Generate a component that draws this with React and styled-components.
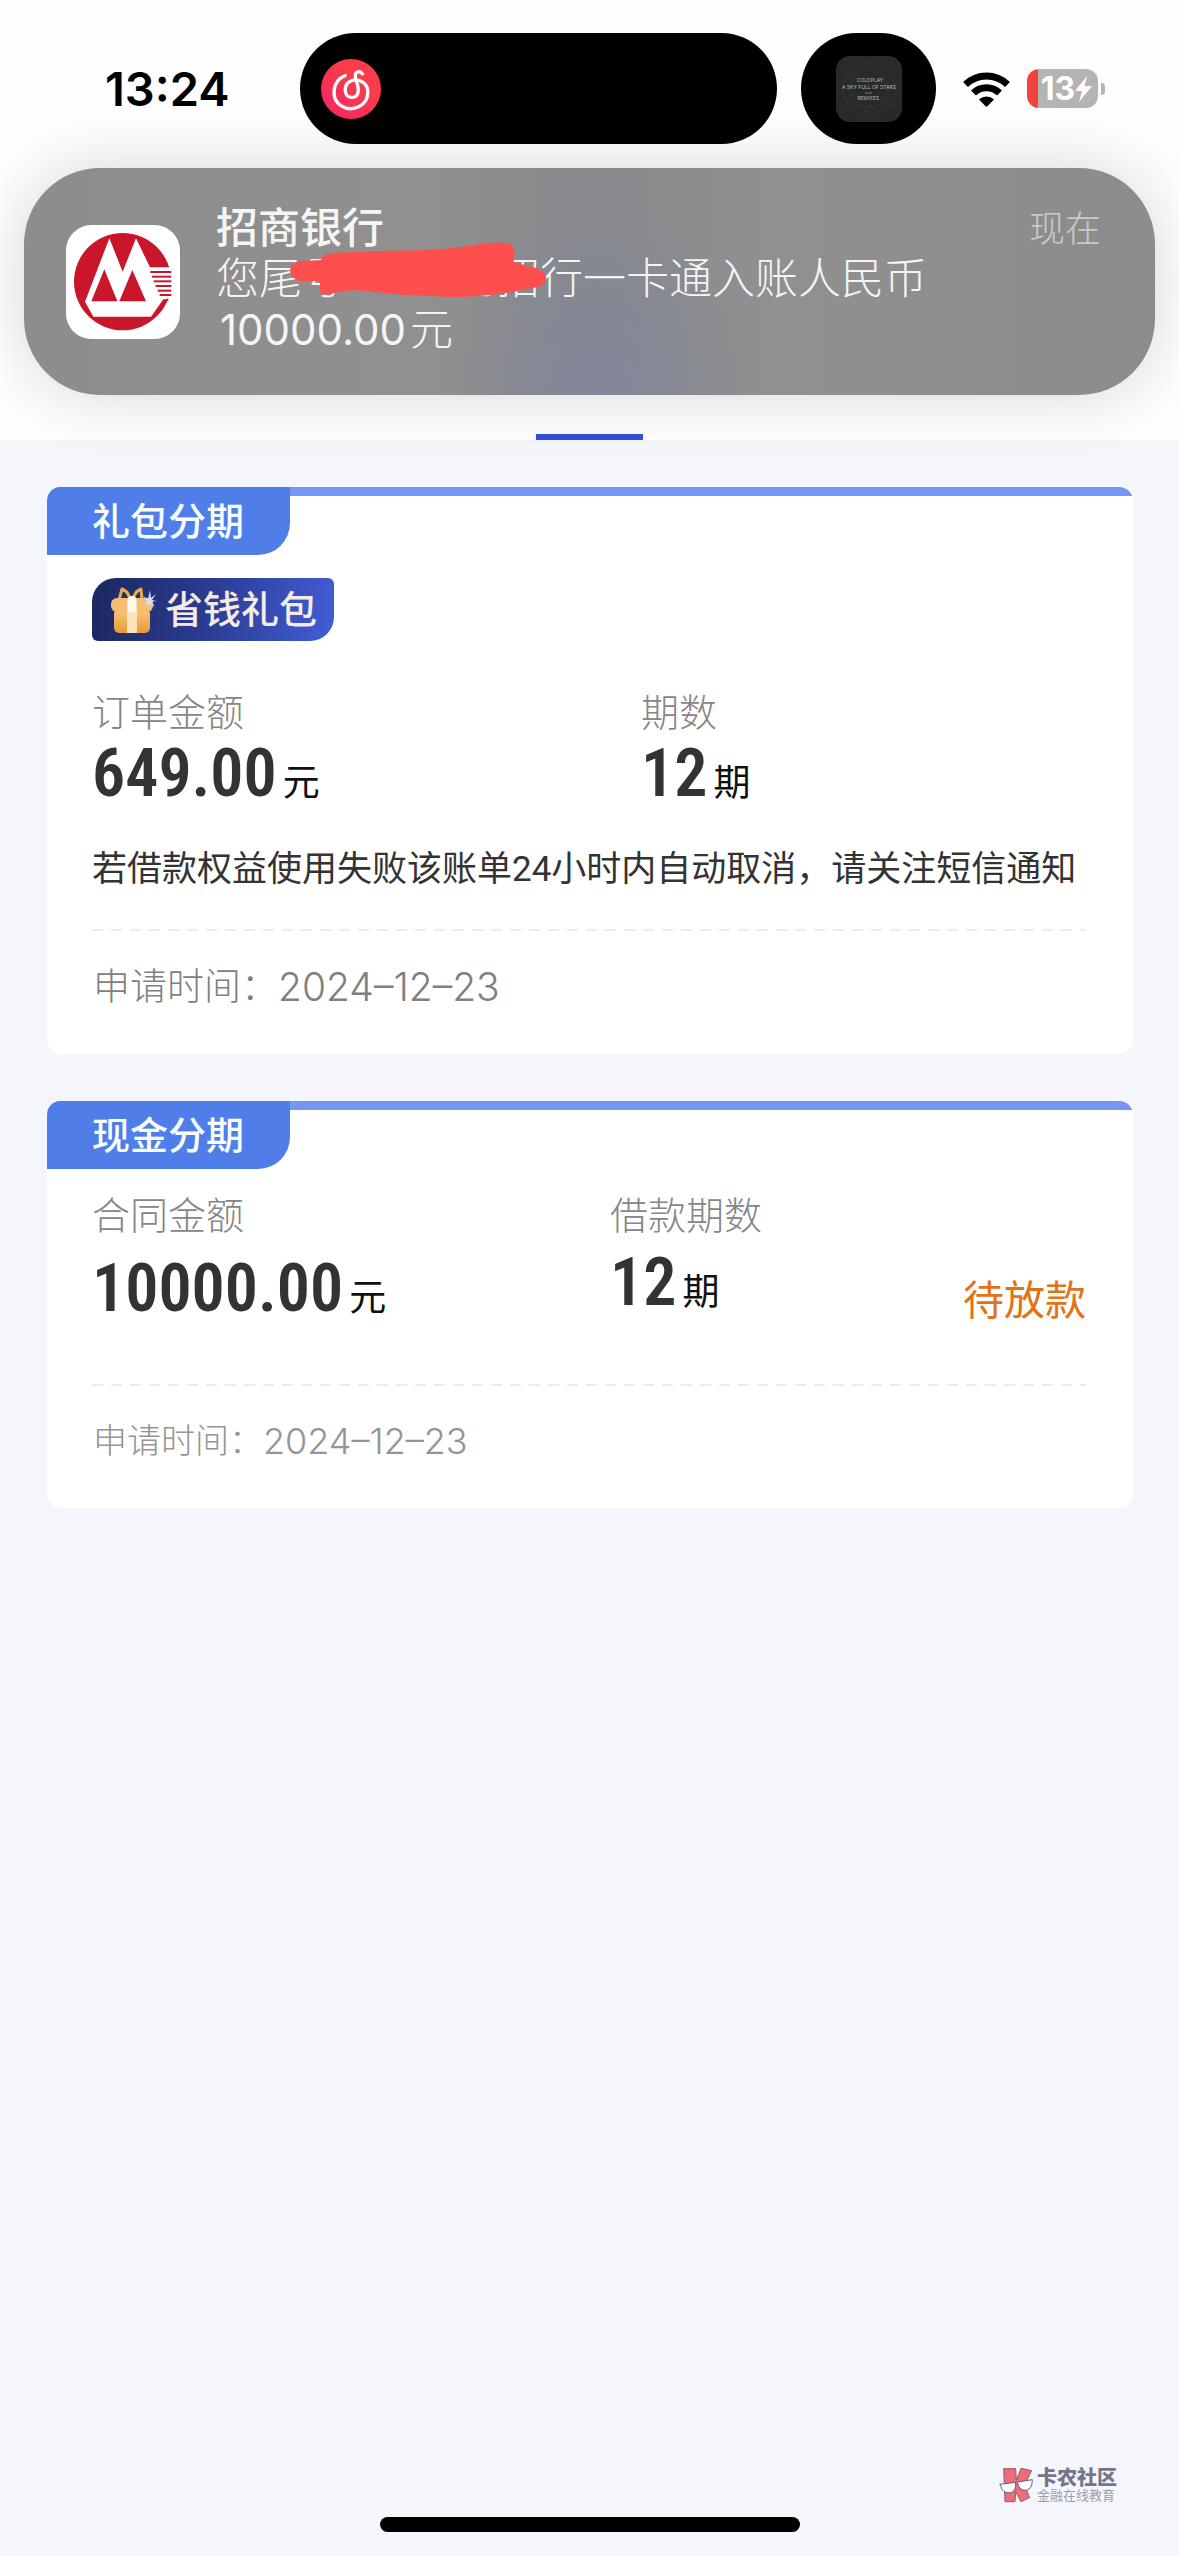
import React from "react";
import styled, { createGlobalStyle } from "styled-components";

const GlobalStyle = createGlobalStyle`
  * { box-sizing: border-box; }
  body {
    margin: 0;
    background: #f4f6fb;
    color: #333333;
    font-family: Inter, "Noto Sans CJK SC", sans-serif;
  }
  h1, h2, p, dl, dt, dd { margin: 0; font-weight: inherit; }
`;

const Page = styled.div`
  min-height: 100vh;
  display: flex;
  flex-direction: column;
`;

const Header = styled.header`
  display: flex;
  flex-direction: column;
  background: #fefefe;
`;

const StatusBar = styled.div`
  display: grid;
  grid-template-columns: 300fr 477px 24px 135px 243fr;
  align-items: center;
  padding: 33px 0 24px;
`;

const Clock = styled.time`
  padding-left: 35%;
  font-size: 47px;
  line-height: 56px;
  font-weight: 600;
  color: #000000;
`;

const Island = styled.div`
  grid-column: ${(p) => p.$column};
  display: flex;
  align-items: center;
  justify-content: ${(p) => (p.$center ? "center" : "flex-start")};
  height: 111px;
  padding: 0 ${(p) => (p.$center ? 0 : 21)}px;
  border-radius: 56px;
  background: #000000;
`;

const AlbumArt = styled.div`
  width: 66px;
  height: 66px;
  border-radius: 14px;
  overflow: hidden;
  background: #292b2b;
`;

const Indicators = styled.div`
  grid-column: 5;
  display: flex;
  align-items: center;
  gap: 17px;
  padding-left: 27px;
`;

const BatteryWrap = styled.div`
  display: flex;
  align-items: center;
  gap: 3px;
`;

const Battery = styled.div`
  display: flex;
  align-items: center;
  justify-content: center;
  width: 71px;
  height: 39px;
  padding-left: 8px;
  border-radius: 12px;
  background: linear-gradient(to right, #f4433c 11px, #b4b4b4 11px);
  color: #ffffff;
  font-size: 32px;
  line-height: 39px;
  font-weight: 700;
`;

const BatteryCap = styled.span`
  width: 4px;
  height: 12px;
  border-radius: 0 6px 6px 0;
  background: #b4b4b4;
`;

const Notification = styled.section`
  display: flex;
  align-items: flex-start;
  margin: 0 24px 39px;
  padding: 34px 54px 40px 42px;
  border-radius: 76px;
  background:
    radial-gradient(ellipse 150px 190px at 51% 100%, #82879a 0%, rgba(130, 135, 154, 0) 100%),
    linear-gradient(to right, #8d8d8d 0%, #909090 36%, #88898d 48%, #88898d 52%, #909090 66%, #8c8c8c 100%);
  box-shadow: 0 0 64px rgba(0, 0, 0, 0.16);
  color: #f5f5f6;
  font-size: 43px;
  line-height: 51px;
`;

const AppIcon = styled.svg`
  flex: none;
  width: 114px;
  height: 114px;
  margin: 23px 36px 0 0;
`;

const Message = styled.div`
  flex: 1;
`;

const MessageTitle = styled.h1`
  font-size: 42px;
  line-height: 51px;
  font-weight: 500;
`;

const MessageText = styled.p`
  position: relative;
  font-weight: 300;
`;

const Hidden = styled.span`
  display: inline-block;
  width: 109px;
`;

const Scribble = styled.svg`
  position: absolute;
  left: 74px;
  top: -11px;
  width: 257px;
  height: 56px;
`;

const AmountText = styled.span`
  padding-left: 4px;
  margin-right: 4px;
  font-weight: 400;
  font-size: 42px;
`;

const When = styled.time`
  font-size: 36px;
  line-height: 54px;
  color: #cacacb;
  font-weight: 300;
`;

const TabIndicator = styled.div`
  align-self: center;
  width: 107px;
  height: 6px;
  background: #2f50d6;
`;

const Bills = styled.main`
  display: flex;
  flex-direction: column;
  gap: 47px;
  padding: 47px 46px 0 47px;
`;

const Card = styled.article`
  display: flex;
  flex-direction: column;
  align-items: flex-start;
  overflow: hidden;
  border-radius: 14px;
  background: linear-gradient(#7596f3 9px, #ffffff 9px);
`;

const CardTab = styled.h2`
  padding: 6px 46px 6px 45px;
  border-radius: 0 0 32px 0;
  background: #4f7ee9;
  color: #f8fdff;
  font-size: 38px;
  line-height: 56px;
  font-weight: 500;
`;

const CardBody = styled.div`
  align-self: stretch;
  display: flex;
  flex-direction: column;
  padding: 23px 47px 44px 45px;
`;

const GiftBadge = styled.div`
  align-self: flex-start;
  display: flex;
  align-items: center;
  gap: 8px;
  margin-bottom: 48px;
  padding: 0 17px;
  border-radius: 24px 6px 24px 6px;
  background: linear-gradient(100deg, #1b275f 0%, #2c3d95 50%, #425ed6 100%);
  color: #f5ebe6;
  font-size: 38px;
  line-height: 63px;
  font-weight: 500;
`;

const Facts = styled.dl`
  display: grid;
  grid-template-columns: ${(p) => p.$columns};
`;

const FactLabel = styled.dt`
  font-size: 38px;
  line-height: 46px;
  font-weight: 300;
  color: #868686;
`;

const FactValue = styled.dd`
  display: flex;
  align-items: baseline;
  gap: 6px;
  margin-top: ${(p) => p.$gap}px;
  font-size: 37px;
  line-height: 60px;
  color: #111111;
`;

const Figure = styled.span`
  font-family: "Roboto Condensed", Roboto, sans-serif;
  font-size: 66px;
  font-weight: 600;
  color: #333333;
`;

const State = styled.p`
  align-self: end;
  justify-self: end;
  font-size: 41px;
  line-height: 56px;
  white-space: nowrap;
  color: #e37116;
`;

const Note = styled.p`
  margin-top: 32px;
  font-family: Roboto, "Noto Sans CJK SC", sans-serif;
  font-size: 35px;
  line-height: 50px;
  white-space: nowrap;
`;

const Divider = styled.div`
  height: 2px;
  margin: ${(p) => p.$above}px 0 ${(p) => p.$below}px;
  background: repeating-linear-gradient(to right, #ececec 0 11px, transparent 11px 19px);
`;

const Applied = styled.p`
  display: flex;
  padding-left: 1px;
  font-size: ${(p) => (p.$small ? 34 : 37)}px;
  line-height: 46px;
  font-weight: 300;
  color: ${(p) => (p.$small ? "#949494" : "#808080")};
`;

const AppliedDate = styled.time`
  font-size: ${(p) => (p.$small ? 36 : 39)}px;
`;

const Footer = styled.footer`
  display: flex;
  flex-direction: column;
  gap: 14px;
  margin-top: auto;
  padding-bottom: 24px;
`;

const Community = styled.div`
  align-self: flex-end;
  display: flex;
  align-items: center;
  gap: 4px;
  margin-right: 62px;
`;

const CommunityName = styled.div`
  display: flex;
  flex-direction: column;
  color: #74758a;
  font-size: 20px;
  line-height: 20px;
  font-weight: 900;
`;

const CommunityTag = styled.span`
  font-size: 13px;
  line-height: 14px;
  font-weight: 400;
  color: #9b9ca8;
`;

const HomeIndicator = styled.div`
  align-self: center;
  width: 420px;
  height: 15px;
  border-radius: 8px;
  background: #000000;
`;

const MusicIcon = () => (
  <svg width="60" height="60" viewBox="64 87 178 178" aria-hidden="true">
    <defs>
      <linearGradient id="music" x1="0" y1="1" x2="0.6" y2="0.3">
        <stop offset="0" stopColor="#f5236a" />
        <stop offset="1" stopColor="#fb3d49" />
      </linearGradient>
    </defs>
    <circle cx="153" cy="176" r="89" fill="url(#music)" />
    <path
      d="M136 136 C96 152 92 206 124 226 C158 247 204 224 203 184 C202 156 172 142 151 153 C130 163 131 200 154 201 C174 201 177 184 173 166 L166 142 C163 124 178 120 187 131"
      fill="none"
      stroke="#ffffff"
      strokeWidth="10"
      strokeLinecap="round"
    />
  </svg>
);

const AlbumCover = () => (
  <svg width="66" height="66" viewBox="0 0 66 66" aria-hidden="true">
    <g fill="none" stroke="#3c4342" strokeWidth="1" strokeDasharray="2 3 1 2">
      <circle cx="33" cy="33" r="26" />
      <circle cx="33" cy="33" r="19" />
      <path d="M10 18l10 6M46 14l8 8M26 48l6 8M36 50l-8 7M48 46l6 6" />
    </g>
    <g fill="#b4b8b6" fontFamily="Inter, sans-serif" fontSize="5" textAnchor="middle">
      <text x="34" y="26">COLDPLAY</text>
      <text x="33" y="33">A SKY FULL OF STARS</text>
      <text x="32" y="44">REMIXES</text>
    </g>
    <path d="M29 37h7" stroke="#777b7a" strokeWidth="1" />
  </svg>
);

const WifiIcon = () => (
  <svg width="47" height="36" viewBox="0 0 47 36" aria-hidden="true">
    <g fill="none" stroke="#000000" strokeWidth="7">
      <path d="M2.500 13.500a30 30 0 0 1 42 0" />
      <path d="M10.500 22a18.500 18.500 0 0 1 26 0" />
    </g>
    <path d="M16 28.500a11 11 0 0 1 15 0l-6.300 6.500q-1.200 1-2.400 0z" fill="#000000" />
  </svg>
);

const BoltIcon = () => (
  <svg width="17" height="26" viewBox="0 0 17 26" aria-hidden="true">
    <path d="M12 0L0 15h7L4 26 17 10H9.500z" fill="#ffffff" />
  </svg>
);

const stripes = [
  [301, 183], [306, 197], [311, 211], [317, 225], [323, 239], [329, 252],
];

const BankIcon = () => (
  <AppIcon viewBox="48 45 342 342" role="img" aria-label="招商银行">
    <rect x="48" y="45" width="342" height="342" rx="76" fill="#ffffff" />
    <circle cx="218" cy="215" r="146" fill="#c9162c" />
    <path
      d="M178 85L218 185 258 85 300 172H372V266H350L308 320H130L105 275z"
      fill="#ffffff"
    />
    <path d="M340 268h17l-50 58h-8z" fill="#c9162c" />
    <path d="M163 178l39 96h-78zM247 180l41 94h-80z" fill="#c9162c" />
    {stripes.map(([x, y]) => (
      <rect key={y} x={x} y={y} width={364 - x} height="6" fill="#c9162c" />
    ))}
  </AppIcon>
);

const GiftIcon = () => (
  <svg width="48" height="50" viewBox="0 0 48 50" aria-hidden="true">
    <defs>
      <linearGradient id="gift" x1="0" y1="0" x2="0" y2="1">
        <stop offset="0" stopColor="#f8c87e" />
        <stop offset="1" stopColor="#e79a37" />
      </linearGradient>
    </defs>
    <path
      d="M10 15L13 4q7 3 8 11M33 15L32 4q-7 3-8 11"
      fill="none"
      stroke="#eba84e"
      strokeWidth="3"
      strokeLinejoin="round"
    />
    <rect x="5" y="24" width="36" height="24" rx="5" fill="url(#gift)" />
    <rect x="2" y="13" width="42" height="14" rx="6" fill="#f4bd72" />
    <path d="M18 17q0-6 5-6t5 6v31H18z" fill="#fbe3bd" />
    <path d="M19 15q0-4 4-4t4 4v12h-8z" fill="#fffaf0" />
    <path
      d="M41 5l1 8 5-4-4 6 4 1-4 1 3 5-5-4-1 6-1-6-4 3 3-5-4-5 5 3z"
      fill="#cfe0ff"
    />
  </svg>
);

const CommunityLogo = () => (
  <svg width="34" height="36" viewBox="0 0 102 108" aria-hidden="true">
    <path
      d="M14 5H50L52 40 66 4 98 11 76 54 92 92 66 104 50 74 48 104H18z"
      fill="#ef6c78"
      stroke="#86616f"
      strokeWidth="3"
    />
    <g fill="#fbfcff" stroke="#5f6072" strokeWidth="3">
      <path d="M2 52L50 46Q52 74 34 77 10 80 6 58z" />
      <path d="M55 45L100 38Q100 66 82 70 60 72 55 45z" />
    </g>
  </svg>
);

const Fact = ({ label, value, unit, gap }) => (
  <div>
    <FactLabel>{label}</FactLabel>
    <FactValue $gap={gap}>
      <Figure>{value}</Figure>
      {unit}
    </FactValue>
  </div>
);

const AppliedOn = ({ small }) => (
  <Applied $small={small}>
    申请时间：
    <AppliedDate dateTime="2024-12-23" $small={small}>
      2024–12–23
    </AppliedDate>
  </Applied>
);

export default function App() {
  return (
    <Page>
      <GlobalStyle />
      <Header>
        <StatusBar>
          <Clock>13:24</Clock>
          <Island $column={2}>
            <MusicIcon />
          </Island>
          <Island $column={4} $center>
            <AlbumArt>
              <AlbumCover />
            </AlbumArt>
          </Island>
          <Indicators>
            <WifiIcon />
            <BatteryWrap>
              <Battery>
                13
                <BoltIcon />
              </Battery>
              <BatteryCap />
            </BatteryWrap>
          </Indicators>
        </StatusBar>
        <Notification>
          <BankIcon />
          <Message>
            <MessageTitle>招商银行</MessageTitle>
            <MessageText>
              您尾号
              <Hidden />
              的招行一卡通入账人民币
              <br />
              <AmountText>10000.00</AmountText>元
              <Scribble viewBox="0 0 257 56" aria-hidden="true">
                <path
                  d="M0 29Q0 21 9 19L31 18Q33 12 40 11L89 9 139 8Q170 6 196 1Q219-1 223 4Q226 11 223 20L246 26Q257 31 256 36Q256 43 248 45L216 51Q190 55 162 55L116 53 62 48Q50 50 39 52Q30 54 30 49V39H9Q1 36 0 29z"
                  fill="#fd504e"
                />
              </Scribble>
            </MessageText>
          </Message>
          <When>现在</When>
        </Notification>
        <TabIndicator />
      </Header>
      <Bills>
        <Card>
          <CardTab>礼包分期</CardTab>
          <CardBody>
            <GiftBadge>
              <GiftIcon />
              省钱礼包
            </GiftBadge>
            <Facts $columns="549fr 445fr">
              <Fact label="订单金额" value="649.00" unit="元" gap={9} />
              <Fact label="期数" value="12" unit="期" gap={9} />
            </Facts>
            <Note>若借款权益使用失败该账单24小时内自动取消，请关注短信通知</Note>
            <Divider $above={34} $below={33} />
            <AppliedOn />
          </CardBody>
        </Card>
        <Card>
          <CardTab>现金分期</CardTab>
          <CardBody>
            <Facts $columns="518fr 352fr 124fr">
              <Fact label="合同金额" value="10000.00" unit="元" gap={21} />
              <Fact label="借款期数" value="12" unit="期" gap={15} />
              <State>待放款</State>
            </Facts>
            <Divider $above={56} $below={32} />
            <AppliedOn small />
          </CardBody>
        </Card>
      </Bills>
      <Footer>
        <Community>
          <CommunityLogo />
          <CommunityName>
            卡农社区
            <CommunityTag>金融在线教育</CommunityTag>
          </CommunityName>
        </Community>
        <HomeIndicator />
      </Footer>
    </Page>
  );
}
